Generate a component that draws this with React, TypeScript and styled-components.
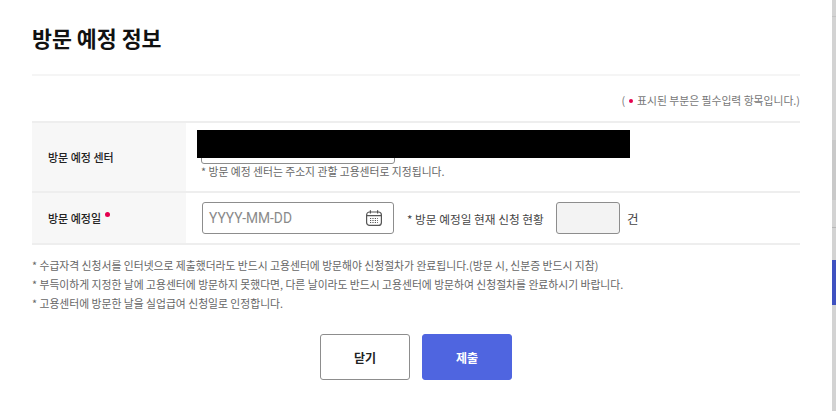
import React from "react"
import styled, { createGlobalStyle } from "styled-components"

const GlobalStyle = createGlobalStyle`
  html, body {
    margin: 0;
    padding: 0;
    background: #fff;
    overflow: hidden;
  }
  body {
    font-family: "Noto Sans CJK KR", "Noto Sans", sans-serif;
  }
`

const Page = styled.div`
  width: 836px;
  height: 411px;
  display: flex;
  overflow: hidden;
`

const Modal = styled.div`
  width: 832px;
  box-sizing: border-box;
  padding: 0 32px;
`

const Scrollbar = styled.div`
  width: 4px;
  height: 411px;
  box-sizing: border-box;
  padding-top: 260px;
  background: linear-gradient(
    #d3d3d3 0 16px,
    #c4c4c4 16px 17px,
    #d3d3d3 17px 140px,
    #c9c9c9 140px 200px,
    #d3d3d3 200px 227px,
    #b8b8b8 227px 228px,
    #d3d3d3 228px
  );
`

const ScrollThumb = styled.div`
  height: 45px;
  background: #3f51c0;
`

const Title = styled.h2`
  margin: 0;
  height: 76px;
  box-sizing: border-box;
  padding-top: 22px;
  font-size: 21.7px;
  line-height: 32px;
  font-weight: 700;
  color: #111;
  border-bottom: 2px solid #f5f5f5;
`

const Legend = styled.p`
  margin: 0;
  height: 45px;
  padding-top: 16px;
  box-sizing: border-box;
  text-align: right;
  font-size: 10.8px;
  line-height: 16px;
  color: #777;
`

const Dot = styled.span`
  display: inline-block;
  width: 4px;
  height: 4px;
  border-radius: 50%;
  background: #e4004f;
  margin: 0 4px 2px 4px;
  vertical-align: middle;
`

const FormTable = styled.div`
  border-top: 2px solid #eeeeee;
`

const Row = styled.div<{ $height: number }>`
  display: flex;
  box-sizing: border-box;
  height: ${(p) => p.$height}px;
  border-bottom: 2px solid #eeeeee;
`

const Label = styled.div`
  width: 154px;
  flex-shrink: 0;
  box-sizing: border-box;
  padding-left: 16px;
  background: #f7f7f7;
  display: flex;
  align-items: center;
  font-size: 11px;
  font-weight: 500;
  color: #222;
`

const RequiredDot = styled.span`
  display: inline-block;
  width: 5px;
  height: 5px;
  border-radius: 50%;
  background: #e4004f;
  margin: -8px 0 0 4px;
`

const CenterCell = styled.div`
  flex: 1;
  padding: 7px 0 0 15px;
  position: relative;
`

const HiddenSelect = styled.div`
  width: 194px;
  height: 34px;
  box-sizing: border-box;
  border: 1px solid #8d8d8d;
  border-radius: 3px;
`

const Redaction = styled.div`
  position: absolute;
  left: 11px;
  top: 7px;
  width: 433px;
  height: 28px;
  background: #000;
`

const Hint = styled.p`
  margin: -1px 0 0;
  font-size: 10.8px;
  line-height: 16px;
  color: #666;
`

const DateCell = styled.div`
  flex: 1;
  display: flex;
  align-items: center;
  padding-left: 16px;
`

const DateField = styled.div`
  width: 192px;
  height: 32px;
  box-sizing: border-box;
  border: 1px solid #8d8d8d;
  border-radius: 3px;
  display: flex;
  align-items: center;
  justify-content: space-between;
  padding: 0 10px 0 6px;
  font-family: "Roboto", sans-serif;
  font-size: 13.8px;
  color: #8a8a8a;
`

const StatusLabel = styled.span`
  width: 149px;
  margin-left: 13px;
  font-size: 11.7px;
  color: #444;
`

const CountBox = styled.div`
  width: 64px;
  height: 32px;
  box-sizing: border-box;
  border: 1px solid #8d8d8d;
  border-radius: 3px;
  background: #f3f3f3;
`

const Unit = styled.span`
  margin-left: 7px;
  font-size: 12.5px;
  color: #444;
`

const Notes = styled.ul`
  list-style: none;
  margin: 11px 0 0;
  padding: 0;
  font-size: 10.8px;
  line-height: 19px;
  color: #666;
`

const Actions = styled.div`
  display: flex;
  justify-content: center;
  gap: 12px;
  margin-top: 21px;
`

const Button = styled.button<{ $primary?: boolean }>`
  width: 90px;
  height: 46px;
  box-sizing: border-box;
  border-radius: 3px;
  border: 1px solid ${(p) => (p.$primary ? "#4f65e0" : "#8d8d8d")};
  background: ${(p) => (p.$primary ? "#4f65e0" : "#fff")};
  color: ${(p) => (p.$primary ? "#fff" : "#222")};
  font-family: inherit;
  font-size: 12px;
  font-weight: 700;
  padding: 0;
`

const CalendarIcon = () => (
  <svg width="18" height="18" viewBox="0 0 18 18" fill="none" stroke="#555" strokeWidth="1.2">
    <rect x="1.6" y="3" width="14.8" height="13.4" rx="3" />
    <path d="M1.8 6.6h14.4M5.4 1.2v3.4M12.6 1.2v3.4" />
    <path d="M5 9.5h8M5 11.5h8M5 13.5h8" strokeDasharray="1.2 1.2" strokeWidth="1" />
  </svg>
)

export default function App() {
  return (
    <Page>
      <GlobalStyle />
      <Modal>
        <Title>방문 예정 정보</Title>
        <Legend>
          (<Dot />표시된 부분은 필수입력 항목입니다.)
        </Legend>
        <FormTable>
          <Row $height={70}>
            <Label>방문 예정 센터</Label>
            <CenterCell>
              <HiddenSelect />
              <Redaction />
              <Hint>* 방문 예정 센터는 주소지 관할 고용센터로 지정됩니다.</Hint>
            </CenterCell>
          </Row>
          <Row $height={52}>
            <Label>
              방문 예정일
              <RequiredDot />
            </Label>
            <DateCell>
              <DateField>
                YYYY-MM-DD
                <CalendarIcon />
              </DateField>
              <StatusLabel>* 방문 예정일 현재 신청 현황</StatusLabel>
              <CountBox />
              <Unit>건</Unit>
            </DateCell>
          </Row>
        </FormTable>
        <Notes>
          <li>* 수급자격 신청서를 인터넷으로 제출했더라도 반드시 고용센터에 방문해야 신청절차가 완료됩니다.(방문 시, 신분증 반드시 지참)</li>
          <li>* 부득이하게 지정한 날에 고용센터에 방문하지 못했다면, 다른 날이라도 반드시 고용센터에 방문하여 신청절차를 완료하시기 바랍니다.</li>
          <li>* 고용센터에 방문한 날을 실업급여 신청일로 인정합니다.</li>
        </Notes>
        <Actions>
          <Button>닫기</Button>
          <Button $primary>제출</Button>
        </Actions>
      </Modal>
      <Scrollbar>
        <ScrollThumb />
      </Scrollbar>
    </Page>
  )
}
